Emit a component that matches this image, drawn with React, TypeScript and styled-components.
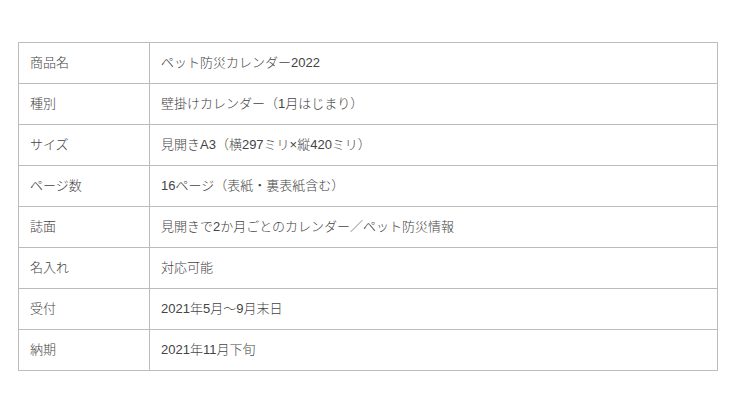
import styled, { createGlobalStyle } from 'styled-components';

interface IRow {
  label: string;
  value: string;
}

const rows: IRow[] = [
  { label: '商品名', value: 'ペット防災カレンダー2022' },
  { label: '種別', value: '壁掛けカレンダー（1月はじまり）' },
  { label: 'サイズ', value: '見開きA3（横297ミリ×縦420ミリ）' },
  { label: 'ページ数', value: '16ページ（表紙・裏表紙含む）' },
  { label: '誌面', value: '見開きで2か月ごとのカレンダー／ペット防災情報' },
  { label: '名入れ', value: '対応可能' },
  { label: '受付', value: '2021年5月～9月末日' },
  { label: '納期', value: '2021年11月下旬' },
];

const GlobalStyle = createGlobalStyle`
  body {
    margin: 0;
    background: #fff;
    font-family: "Liberation Sans", "Noto Sans CJK JP", sans-serif;
  }
`;

const App = () => {
  return (
    <Page>
      <GlobalStyle />
      <SpecTable>
        <colgroup>
          <LabelCol />
          <col />
        </colgroup>
        <tbody>
          {rows.map((row) => (
            <Row key={row.label}>
              <Cell>{row.label}</Cell>
              <Cell>{row.value}</Cell>
            </Row>
          ))}
        </tbody>
      </SpecTable>
    </Page>
  );
};

export default App;

const Page = styled.div`
  padding: 42px 22px 0 18px;
`;

const SpecTable = styled.table`
  width: 700px;
  border-collapse: collapse;
  table-layout: fixed;
  color: #444;
  font-size: 13px;
  font-weight: 300;
`;

const LabelCol = styled.col`
  width: 131px;
`;

const Row = styled.tr`
  height: 41px;
`;

const Cell = styled.td`
  border: 1px solid #bcbcbc;
  padding: 0 11px;
  vertical-align: middle;
  line-height: 1.4;
`;
